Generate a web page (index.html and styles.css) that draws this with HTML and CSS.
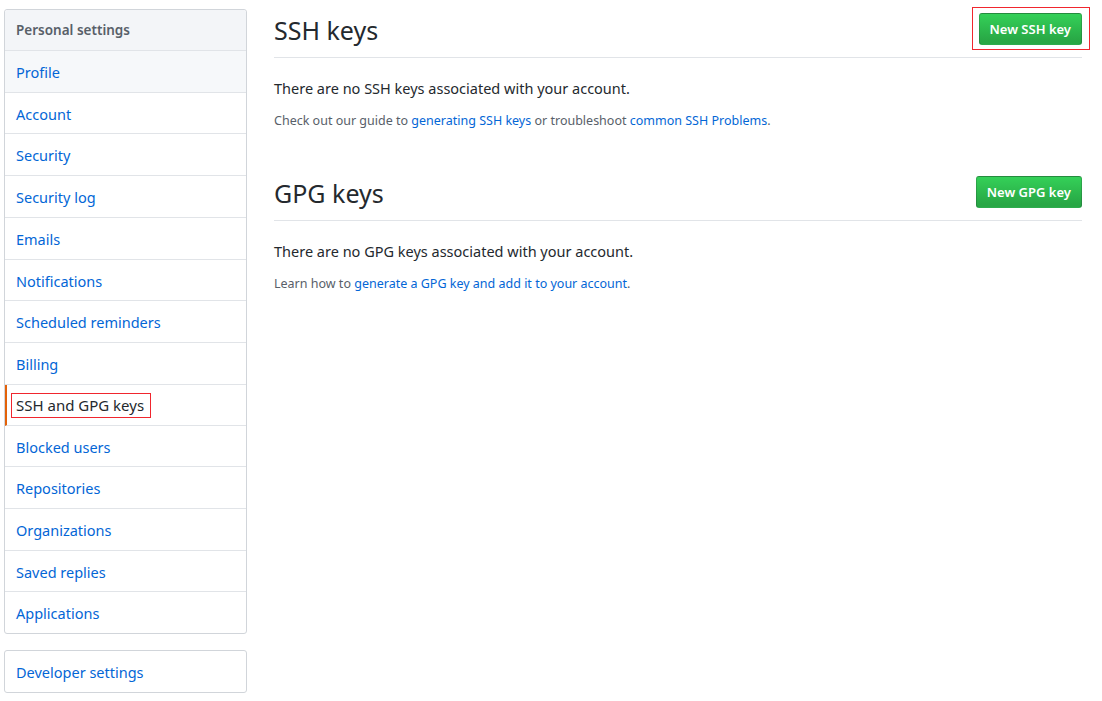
FILE: index.html
```html
<!DOCTYPE html>
<html>
<head>
<meta charset="utf-8">
<link rel="stylesheet" href="styles.css">
</head>
<body>
<div class="page">
  <aside class="sidebar">
    <nav class="menu">
      <div class="menu-heading">Personal settings</div>
      <a class="menu-item hover">Profile</a>
      <a class="menu-item">Account</a>
      <a class="menu-item">Security</a>
      <a class="menu-item">Security log</a>
      <a class="menu-item">Emails</a>
      <a class="menu-item">Notifications</a>
      <a class="menu-item">Scheduled reminders</a>
      <a class="menu-item">Billing</a>
      <a class="menu-item selected"><span class="mark">SSH and GPG keys</span></a>
      <a class="menu-item">Blocked users</a>
      <a class="menu-item">Repositories</a>
      <a class="menu-item">Organizations</a>
      <a class="menu-item">Saved replies</a>
      <a class="menu-item last">Applications</a>
    </nav>
    <nav class="menu dev">
      <a class="menu-item last">Developer settings</a>
    </nav>
  </aside>
  <main class="content">
    <section class="section">
      <div class="subhead">
        <h2 class="subhead-title">SSH keys</h2>
        <a class="btn marked">New SSH key</a>
      </div>
      <p class="lead">There are no SSH keys associated with your account.</p>
      <p class="note">Check out our guide to <a class="link">generating SSH keys</a> or troubleshoot <a class="link">common SSH Problems</a>.</p>
    </section>
    <section class="section gpg">
      <div class="subhead">
        <h2 class="subhead-title">GPG keys</h2>
        <a class="btn">New GPG key</a>
      </div>
      <p class="lead">There are no GPG keys associated with your account.</p>
      <p class="note">Learn how to <a class="link">generate a GPG key and add it to your account</a>.</p>
    </section>
  </main>
</div>
</body>
</html>
```

FILE: styles.css
```css
* { box-sizing: border-box; }
html, body { margin: 0; padding: 0; background: #fff; }
body {
  font-family: "Segoe UI", "Noto Sans", "Liberation Sans", sans-serif;
  font-size: 14px;
  color: #24292e;
}
.page {
  display: flex;
  padding: 9px 20px 0 4px;
  gap: 27px;
}
.sidebar {
  width: 243px;
  flex: none;
  display: flex;
  flex-direction: column;
  gap: 16px;
}
.menu {
  border: 1px solid #d1d5da;
  border-radius: 3px;
  background: #fff;
  display: flex;
  flex-direction: column;
}
.menu-heading {
  background: #f3f5f8;
  color: #586069;
  font-weight: 600;
  font-size: 13.5px;
  line-height: 20px;
  padding: 10px 11px 10px;
  border-bottom: 1px solid #e1e4e8;
  border-radius: 3px 3px 0 0;
}
.menu-item {
  display: block;
  color: #0366d6;
  font-size: 14.5px;
  line-height: 20.7px;
  padding: 11px 11px 9px;
  border-bottom: 1px solid #e1e4e8;
  text-decoration: none;
}
.menu-item.last { border-bottom: 0; border-radius: 0 0 3px 3px; }
.menu-item.hover { background: #f6f8fa; }
.menu-item.selected {
  color: #24292e;
  border-left: 2px solid #e36209;
  padding-left: 9px;
  padding-top: 8px;
  padding-bottom: 7px;
  line-height: 24.7px;
}
.mark {
  display: inline-block;
  position: relative;
  font-size: 15px;
  line-height: 25px;
}
.mark::after {
  content: "";
  position: absolute;
  top: 0;
  bottom: 0;
  left: -5px;
  right: -7px;
  border: 1px solid #f0262e;
}
.content {
  flex: 1;
  min-width: 0;
}
.subhead {
  display: flex;
  align-items: flex-start;
  justify-content: space-between;
  border-bottom: 1px solid #e1e4e8;
  height: 49px;
}
.subhead-title {
  margin: 0;
  font-size: 25px;
  font-weight: 400;
  line-height: 30px;
  padding-top: 6px;
}
.btn {
  display: inline-block;
  margin-top: 4px;
  color: #fff;
  font-weight: 600;
  font-size: 13px;
  line-height: 20px;
  padding: 5px 10px;
  background: linear-gradient(#34d058, #28a745 90%);
  border: 1px solid rgba(27,31,35,0.2);
  border-radius: 3px;
}
.btn.marked { position: relative; }
.btn.marked::after {
  content: "";
  position: absolute;
  top: -7px;
  left: -8px;
  right: -9px;
  bottom: -6px;
  border: 1px solid #f0262e;
}
.lead {
  margin: 19px 0 0;
  font-size: 14.5px;
  line-height: 22px;
}
.note {
  margin: 12px 0 0;
  font-size: 12.5px;
  line-height: 20px;
  color: #586069;
}
.link { color: #0366d6; text-decoration: none; }
.section.gpg { margin-top: 41px; }
```
